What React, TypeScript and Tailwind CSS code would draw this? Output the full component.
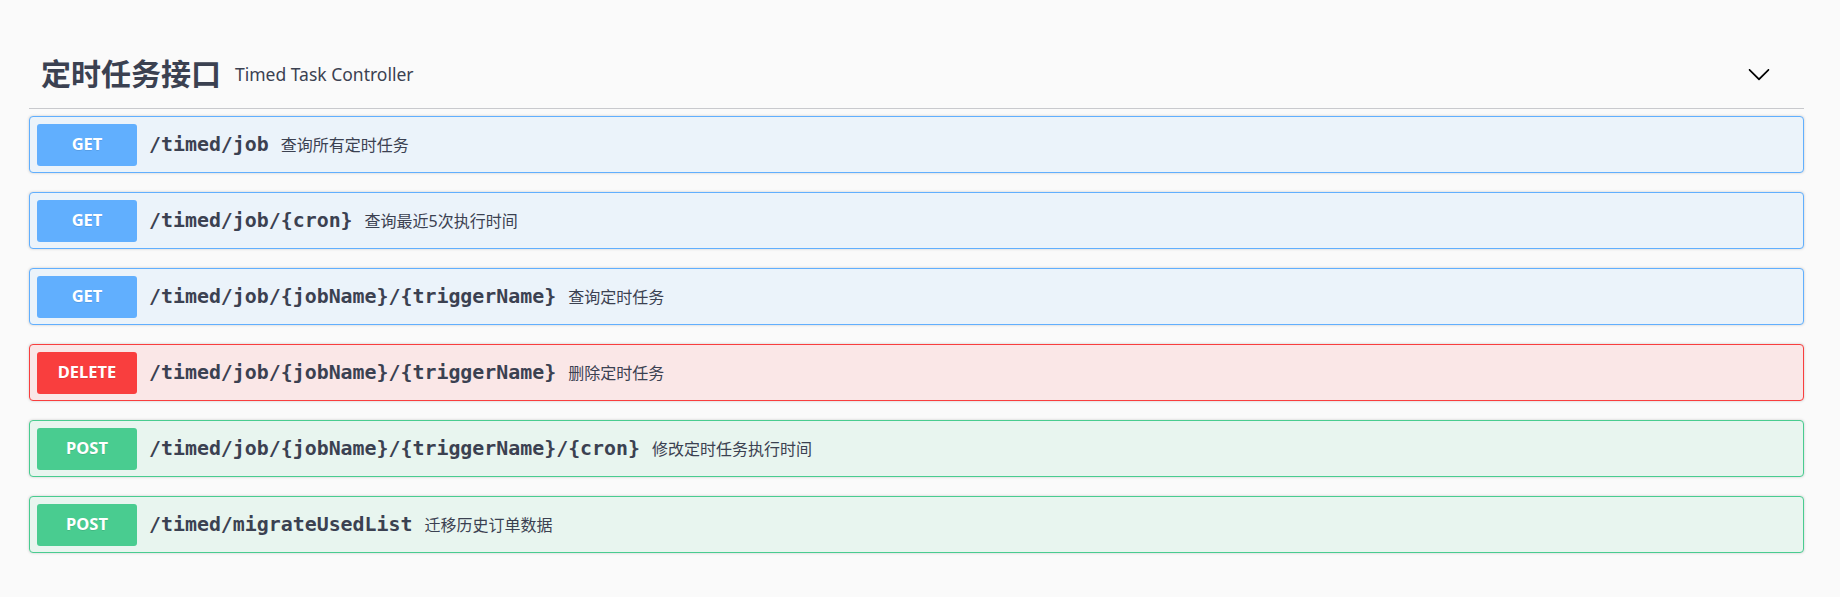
const ops = [
  { method: 'GET', path: '/timed/job', desc: '查询所有定时任务' },
  { method: 'GET', path: '/timed/job/{cron}', desc: '查询最近5次执行时间' },
  { method: 'GET', path: '/timed/job/{jobName}/{triggerName}', desc: '查询定时任务' },
  { method: 'DELETE', path: '/timed/job/{jobName}/{triggerName}', desc: '删除定时任务' },
  { method: 'POST', path: '/timed/job/{jobName}/{triggerName}/{cron}', desc: '修改定时任务执行时间' },
  { method: 'POST', path: '/timed/migrateUsedList', desc: '迁移历史订单数据' },
]

const styles: Record<string, { box: string; badge: string }> = {
  GET: { box: 'border-[#61affe] bg-[#ebf3fa]', badge: 'bg-[#61affe]' },
  DELETE: { box: 'border-[#f93e3e] bg-[#fae7e7]', badge: 'bg-[#f93e3e]' },
  POST: { box: 'border-[#49cc90] bg-[#e8f5ef]', badge: 'bg-[#49cc90]' },
}

function ArrowDown() {
  return (
    <svg width="24" height="24" viewBox="0 0 20 20" fill="#000">
      <path d="M17.418 6.109c.272-.268.709-.268.979 0s.271.701 0 .969l-7.908 7.83c-.27.268-.707.268-.979 0l-7.908-7.83c-.27-.268-.27-.701 0-.969.271-.268.709-.268.979 0L10 13.25l7.418-7.141z" />
    </svg>
  )
}

export default function App() {
  return (
    <div className="min-h-[597px] bg-[#fafafa] pt-[40px] pl-[29px] pr-[36px] text-[#3b4151]"
      style={{ fontFamily: '"Noto Sans", "Noto Sans CJK SC", sans-serif' }}>
      <div className="flex h-[69px] items-center border-b border-[#c8c9cd] pl-[12px] pr-[33px]">
        <span className="text-[30px] font-bold leading-none">定时任务接口</span>
        <span className="ml-[14px] text-[17.5px]">Timed Task Controller</span>
        <span className="ml-auto flex items-center"><ArrowDown /></span>
      </div>

      <div className="mt-[7px] flex flex-col gap-[19px]">
        {ops.map((op, i) => (
          <div key={i}
            className={`flex h-[57px] items-center rounded-[4px] border px-[7px] shadow-[0_0_3px_rgba(0,0,0,0.19)] ${styles[op.method].box}`}>
            <span className={`flex h-[42px] w-[100px] items-center justify-center rounded-[3px] text-[16.5px] font-bold text-white [text-shadow:0_1px_0_rgba(0,0,0,0.1)] ${styles[op.method].badge}`}>
              {op.method}
            </span>
            <span className="ml-[12px] text-[19.9px] font-bold"
              style={{ fontFamily: '"DejaVu Sans Mono", monospace' }}>
              {op.path}
            </span>
            <span className="ml-[12px] text-[16px]">{op.desc}</span>
          </div>
        ))}
      </div>
    </div>
  )
}
